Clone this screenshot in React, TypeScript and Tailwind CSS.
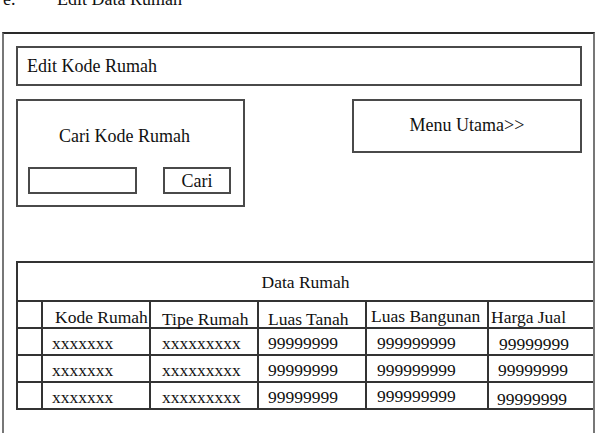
import React from "react";

type Cell = { text: string; cls: string };

// column widths of the Data Rumah grid (border included)
const colWidths = [
  "w-[25px] border-r-2",
  "w-[108px] border-r-2",
  "w-[108px] border-r-2",
  "w-[108px] border-r-2",
  "w-[122px] border-r-2",
  "w-[104px]",
];

const headerCells: Cell[] = [
  { text: "", cls: "" },
  { text: "Kode Rumah", cls: "pl-[12px] pt-[5px]" },
  { text: "Tipe Rumah", cls: "pl-[11px] pt-[7px]" },
  { text: "Luas Tanah", cls: "pl-[9px] pt-[7px]" },
  { text: "Luas Bangunan", cls: "pl-[4px] pt-[4px]" },
  { text: "Harga Jual", cls: "pl-[2px] pt-[5px]" },
];

const dataRows: Cell[][] = [
  [
    { text: "", cls: "" },
    { text: "xxxxxxx", cls: "pl-[9px] pt-[4px]" },
    { text: "xxxxxxxxx", cls: "pl-[11px] pt-[4px]" },
    { text: "99999999", cls: "pl-[9px] pt-[4px]" },
    { text: "999999999", cls: "pl-[10px] pt-[4px]" },
    { text: "99999999", cls: "pl-[10px] pt-[5px]" },
  ],
  [
    { text: "", cls: "" },
    { text: "xxxxxxx", cls: "pl-[9px] pt-[4px]" },
    { text: "xxxxxxxxx", cls: "pl-[11px] pt-[4px]" },
    { text: "99999999", cls: "pl-[9px] pt-[4px]" },
    { text: "999999999", cls: "pl-[10px] pt-[4px]" },
    { text: "99999999", cls: "pl-[9px] pt-[4px]" },
  ],
  [
    { text: "", cls: "" },
    { text: "xxxxxxx", cls: "pl-[9px] pt-[4px]" },
    { text: "xxxxxxxxx", cls: "pl-[11px] pt-[4px]" },
    { text: "99999999", cls: "pl-[9px] pt-[4px]" },
    { text: "999999999", cls: "pl-[10px] pt-[3px]" },
    { text: "99999999", cls: "pl-[8px] pt-[6px]" },
  ],
];

function TableRow({ cells }: { cells: Cell[] }) {
  return (
    <div className="flex h-[27px] border-b-2 border-[#333]">
      {cells.map((c, i) => (
        <div
          key={i}
          className={`${colWidths[i]} ${c.cls} h-full shrink-0 whitespace-nowrap border-[#333] text-[17.5px] leading-[20px]`}
        >
          {c.text}
        </div>
      ))}
    </div>
  );
}

export default function App() {
  return (
    <div
      className="h-[433px] w-[599px] overflow-hidden bg-white text-[#111]"
      style={{ fontFamily: '"Liberation Serif", "Times New Roman", serif' }}
    >
      {/* section caption */}
      <div className="-mt-[11px] flex h-[20px] pl-[3px] text-[18px] leading-[20px]">
        <span className="w-[54px]">e.</span>
        <span>Edit Data Rumah</span>
      </div>

      {/* form frame */}
      <div className="ml-[2px] mt-[23px] h-[420px] w-[593px] border-x-2 border-t-2 border-x-[#777] border-t-[#2a2a2a] pl-[12px] pr-[11px] pt-[12px]">
        <div className="flex h-[40px] items-center border-2 border-[#4a4a4a] pl-[9px] text-[18px] leading-[20px]">
          Edit Kode Rumah
        </div>

        <div className="mt-[13px] flex items-start justify-between">
          <div className="h-[108px] w-[229px] border-2 border-[#4a4a4a]">
            <div className="pl-[41px] pt-[25px] text-[18px] leading-[20px]">Cari Kode Rumah</div>
            <div className="mt-[21px] flex pl-[10px]">
              <div className="h-[27px] w-[109px] border-2 border-[#4a4a4a]" />
              <div className="ml-[26px] flex h-[27px] w-[68px] items-center justify-center border-2 border-[#4a4a4a] text-[18px] leading-[20px]">
                Cari
              </div>
            </div>
          </div>

          <div className="flex h-[54px] w-[230px] justify-center border-2 border-[#4a4a4a] pt-[14px] text-[18px] leading-[20px]">
            Menu Utama&gt;&gt;
          </div>
        </div>

        {/* Data Rumah grid */}
        <div className="mt-[54px] w-[577px] border-l-2 border-t-2 border-[#333]">
          <div className="h-[39px] border-b-2 border-[#333] pt-[9px] text-center text-[17.5px] leading-[20px]">
            Data Rumah
          </div>
          <TableRow cells={headerCells} />
          {dataRows.map((r, i) => (
            <TableRow key={i} cells={r} />
          ))}
        </div>
      </div>
    </div>
  );
}
